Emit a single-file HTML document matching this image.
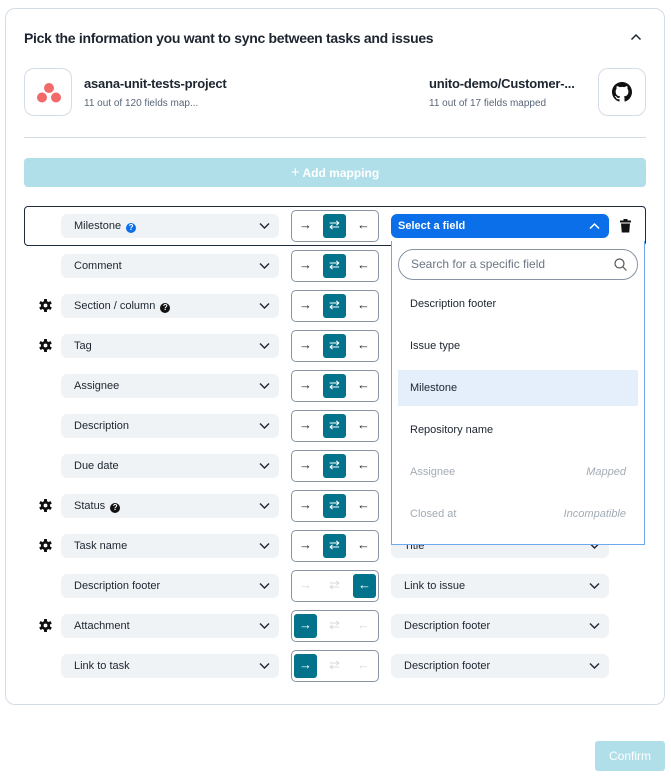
<!DOCTYPE html>
<html><head><meta charset="utf-8"><style>
*{box-sizing:border-box;margin:0;padding:0}
body{width:671px;height:782px;background:#fff;font-family:"Liberation Sans",sans-serif;color:#1c2530;position:relative;overflow:hidden}
.a{position:absolute}
.card{left:5px;top:8px;width:660px;height:697px;border:1px solid #d4dce6;border-radius:10px}
.title{left:24px;top:30px;font-size:14px;font-weight:bold;letter-spacing:-0.3px}
.logo{width:48px;height:48px;border:1px solid #d4dce6;border-radius:10px;top:68px}
.name{font-size:13px;font-weight:bold;top:76px;letter-spacing:-0.2px}
.sub{font-size:10px;color:#59677a;top:98px}
.sel{height:24px;background:#f0f3f6;border-radius:6px;font-size:11px;line-height:24px;padding-left:13px}
.chev{position:absolute;right:9px;top:8px}
.ab{width:88px;height:32px;border:1px solid #8894a3;border-radius:5px;background:#fff}
.btn{position:absolute;top:3px;width:23px;height:24px;border-radius:3px;font-size:13px;line-height:22px;text-align:center;color:#1c2530}
.on{background:#03738c;color:#fff}
.off{color:#d5dbe2}
.help{display:inline-block;width:10px;height:10px;border-radius:50%;background:#111;color:#fff;font-size:8px;line-height:10px;text-align:center;font-weight:bold;vertical-align:-1px;margin-left:5px}
.gear{left:39px;width:13px;height:13px}
.dd{left:391px;top:241px;width:254px;height:304px;border:1px solid #6ea8ee;background:#fff;border-top:none}
.it{position:absolute;left:18px;font-size:11px}
</style></head><body>
<svg width="0" height="0" style="position:absolute"><defs><g id="g"><g fill="#111"><rect x="5" y="0" width="3" height="13" rx="0.5"/><rect x="5" y="0" width="3" height="13" rx="0.5" transform="rotate(60 6.5 6.5)"/><rect x="5" y="0" width="3" height="13" rx="0.5" transform="rotate(120 6.5 6.5)"/><circle cx="6.5" cy="6.5" r="4.6"/></g><circle cx="6.5" cy="6.5" r="1.9" fill="#fff"/></g></defs></svg>
<div class="a card"></div>
<div class="a title">Pick the information you want to sync between tasks and issues</div>
<svg class="a" style="left:630px;top:33px" width="12" height="8" viewBox="0 0 12 8"><path d="M1.5 6.5L6 2l4.5 4.5" fill="none" stroke="#1c2530" stroke-width="1.5"/></svg>

<div class="a logo" style="left:24px"><svg width="46" height="46"><circle cx="24" cy="19" r="5" fill="#f06a6a"/><circle cx="17" cy="28.5" r="5" fill="#f06a6a"/><circle cx="31" cy="28.5" r="5" fill="#f06a6a"/></svg></div>
<div class="a name" style="left:84px">asana-unit-tests-project</div>
<div class="a sub" style="left:84px">11 out of 120 fields map...</div>
<div class="a name" style="left:429px">unito-demo/Customer-...</div>
<div class="a sub" style="left:429px">11 out of 17 fields mapped</div>
<div class="a logo" style="left:598px"><svg style="position:absolute;left:13px;top:13px" width="20" height="20" viewBox="0 0 16 16"><path fill="#111" d="M8 0C3.58 0 0 3.58 0 8c0 3.540 2.290 6.530 5.470 7.590.4.07.55-.17.55-.38 0-.19-.01-.82-.01-1.49-2.010.37-2.530-.49-2.690-.94-.09-.23-.48-.94-.82-1.130-.28-.15-.68-.52-.01-.53.63-.01 1.080.58 1.230.82.72 1.210 1.870.87 2.330.66.07-.52.28-.87.51-1.070-1.780-.2-3.640-.89-3.640-3.950 0-.87.31-1.590.82-2.150-.08-.2-.36-1.020.08-2.120 0 0 .67-.21 2.200.82.64-.18 1.320-.27 2-.27.68 0 1.360.09 2 .27 1.530-1.040 2.200-.82 2.200-.82.44 1.100.16 1.920.08 2.120.51.56.82 1.270.82 2.150 0 3.070-1.870 3.750-3.650 3.950.29.25.54.73.54 1.480 0 1.070-.01 1.930-.01 2.200 0 .21.15.46.55.38A8.013 8.013 0 0016 8c0-4.420-3.580-8-8-8z"/></svg></div>
<div class="a" style="left:24px;top:137px;width:622px;height:1px;background:#d4dce6"></div>
<div class="a" style="left:24px;top:158px;width:622px;height:29px;background:#b0dfe9;border-radius:4px;color:#fff;font-size:12px;font-weight:bold;text-align:center;line-height:29px"><span style="font-weight:normal;font-size:15px">+</span> Add mapping</div>

<div class="a" style="left:24px;top:206px;width:622px;height:40px;border:1px solid #1d2b3a;border-radius:4px"></div>

<div class="a sel" style="left:61px;top:214px;width:218px">Milestone<span class="help" style="background:#0a6fe8">?</span><svg class="chev" width="11" height="8"><path d="M1 1.5l4.5 4.5 4.5-4.5" fill="none" stroke="#1c2530" stroke-width="1.4"/></svg></div>
<div class="a ab" style="left:291px;top:210px"><div class="btn" style="left:2px">→</div><div class="btn on" style="left:31px">⇄</div><div class="btn" style="left:60px">←</div></div>
<div class="a sel" style="left:391px;top:214px;width:218px;background:#0a6fe8;color:#fff;font-weight:bold;padding-left:7px">Select a field<svg class="chev" style="top:8px" width="11" height="8"><path d="M1 6.5l4.5-4.5 4.5 4.5" fill="none" stroke="#fff" stroke-width="1.5"/></svg></div>
<svg class="a" style="left:620px;top:219px" width="11" height="14" viewBox="0 0 11 14"><rect x="0" y="1.5" width="11" height="2" fill="#111"/><rect x="3.5" y="0" width="4" height="2" fill="#111"/><path d="M1 4.5h9l-.8 9H1.8z" fill="#111"/></svg>

<div class="a sel" style="left:61px;top:254px;width:218px">Comment<svg class="chev" width="11" height="8"><path d="M1 1.5l4.5 4.5 4.5-4.5" fill="none" stroke="#1c2530" stroke-width="1.4"/></svg></div>
<div class="a ab" style="left:291px;top:250px"><div class="btn" style="left:2px">→</div><div class="btn on" style="left:31px">⇄</div><div class="btn" style="left:60px">←</div></div>

<svg class="a gear" style="top:299px"><use href="#g"/></svg>
<div class="a sel" style="left:61px;top:294px;width:218px">Section / column<span class="help">?</span><svg class="chev" width="11" height="8"><path d="M1 1.5l4.5 4.5 4.5-4.5" fill="none" stroke="#1c2530" stroke-width="1.4"/></svg></div>
<div class="a ab" style="left:291px;top:290px"><div class="btn" style="left:2px">→</div><div class="btn on" style="left:31px">⇄</div><div class="btn" style="left:60px">←</div></div>

<svg class="a gear" style="top:339px"><use href="#g"/></svg>
<div class="a sel" style="left:61px;top:334px;width:218px">Tag<svg class="chev" width="11" height="8"><path d="M1 1.5l4.5 4.5 4.5-4.5" fill="none" stroke="#1c2530" stroke-width="1.4"/></svg></div>
<div class="a ab" style="left:291px;top:330px"><div class="btn" style="left:2px">→</div><div class="btn on" style="left:31px">⇄</div><div class="btn" style="left:60px">←</div></div>

<div class="a sel" style="left:61px;top:374px;width:218px">Assignee<svg class="chev" width="11" height="8"><path d="M1 1.5l4.5 4.5 4.5-4.5" fill="none" stroke="#1c2530" stroke-width="1.4"/></svg></div>
<div class="a ab" style="left:291px;top:370px"><div class="btn" style="left:2px">→</div><div class="btn on" style="left:31px">⇄</div><div class="btn" style="left:60px">←</div></div>

<div class="a sel" style="left:61px;top:414px;width:218px">Description<svg class="chev" width="11" height="8"><path d="M1 1.5l4.5 4.5 4.5-4.5" fill="none" stroke="#1c2530" stroke-width="1.4"/></svg></div>
<div class="a ab" style="left:291px;top:410px"><div class="btn" style="left:2px">→</div><div class="btn on" style="left:31px">⇄</div><div class="btn" style="left:60px">←</div></div>

<div class="a sel" style="left:61px;top:454px;width:218px">Due date<svg class="chev" width="11" height="8"><path d="M1 1.5l4.5 4.5 4.5-4.5" fill="none" stroke="#1c2530" stroke-width="1.4"/></svg></div>
<div class="a ab" style="left:291px;top:450px"><div class="btn" style="left:2px">→</div><div class="btn on" style="left:31px">⇄</div><div class="btn" style="left:60px">←</div></div>

<svg class="a gear" style="top:499px"><use href="#g"/></svg>
<div class="a sel" style="left:61px;top:494px;width:218px">Status<span class="help">?</span><svg class="chev" width="11" height="8"><path d="M1 1.5l4.5 4.5 4.5-4.5" fill="none" stroke="#1c2530" stroke-width="1.4"/></svg></div>
<div class="a ab" style="left:291px;top:490px"><div class="btn" style="left:2px">→</div><div class="btn on" style="left:31px">⇄</div><div class="btn" style="left:60px">←</div></div>

<svg class="a gear" style="top:539px"><use href="#g"/></svg>
<div class="a sel" style="left:61px;top:534px;width:218px">Task name<svg class="chev" width="11" height="8"><path d="M1 1.5l4.5 4.5 4.5-4.5" fill="none" stroke="#1c2530" stroke-width="1.4"/></svg></div>
<div class="a ab" style="left:291px;top:530px"><div class="btn" style="left:2px">→</div><div class="btn on" style="left:31px">⇄</div><div class="btn" style="left:60px">←</div></div>
<div class="a sel" style="left:391px;top:534px;width:218px">Title<svg class="chev" width="11" height="8"><path d="M1 1.5l4.5 4.5 4.5-4.5" fill="none" stroke="#1c2530" stroke-width="1.4"/></svg></div>

<div class="a sel" style="left:61px;top:574px;width:218px">Description footer<svg class="chev" width="11" height="8"><path d="M1 1.5l4.5 4.5 4.5-4.5" fill="none" stroke="#1c2530" stroke-width="1.4"/></svg></div>
<div class="a ab" style="left:291px;top:570px"><div class="btn off" style="left:2px">→</div><div class="btn off" style="left:31px">⇄</div><div class="btn on" style="left:61px">←</div></div>
<div class="a sel" style="left:391px;top:574px;width:218px">Link to issue<svg class="chev" width="11" height="8"><path d="M1 1.5l4.5 4.5 4.5-4.5" fill="none" stroke="#1c2530" stroke-width="1.4"/></svg></div>

<svg class="a gear" style="top:619px"><use href="#g"/></svg>
<div class="a sel" style="left:61px;top:614px;width:218px">Attachment<svg class="chev" width="11" height="8"><path d="M1 1.5l4.5 4.5 4.5-4.5" fill="none" stroke="#1c2530" stroke-width="1.4"/></svg></div>
<div class="a ab" style="left:291px;top:610px"><div class="btn on" style="left:2px">→</div><div class="btn off" style="left:31px">⇄</div><div class="btn off" style="left:60px">←</div></div>
<div class="a sel" style="left:391px;top:614px;width:218px">Description footer<svg class="chev" width="11" height="8"><path d="M1 1.5l4.5 4.5 4.5-4.5" fill="none" stroke="#1c2530" stroke-width="1.4"/></svg></div>

<div class="a sel" style="left:61px;top:654px;width:218px">Link to task<svg class="chev" width="11" height="8"><path d="M1 1.5l4.5 4.5 4.5-4.5" fill="none" stroke="#1c2530" stroke-width="1.4"/></svg></div>
<div class="a ab" style="left:291px;top:650px"><div class="btn on" style="left:2px">→</div><div class="btn off" style="left:31px">⇄</div><div class="btn off" style="left:60px">←</div></div>
<div class="a sel" style="left:391px;top:654px;width:218px">Description footer<svg class="chev" width="11" height="8"><path d="M1 1.5l4.5 4.5 4.5-4.5" fill="none" stroke="#1c2530" stroke-width="1.4"/></svg></div>

<div class="a dd">
  <div class="a" style="left:6px;top:8px;width:240px;height:31px;border:1px solid #8894a3;border-radius:16px;font-size:12px;color:#6b7684;line-height:29px;padding-left:12px">Search for a specific field
    <svg style="position:absolute;right:10px;top:8px" width="13" height="13"><circle cx="5.5" cy="5.5" r="4.5" fill="none" stroke="#555" stroke-width="1.2"/><path d="M9 9l3.5 3.5" stroke="#555" stroke-width="1.2"/></svg></div>
  <div class="it" style="top:57px">Description footer</div>
  <div class="it" style="top:99px">Issue type</div>
  <div class="a" style="left:6px;top:129px;width:240px;height:36px;background:#e5eefb"></div>
  <div class="it" style="top:141px">Milestone</div>
  <div class="it" style="top:183px">Repository name</div>
  <div class="it" style="top:225px;color:#a2abb6">Assignee</div>
  <div class="a" style="right:18px;top:225px;font-size:11px;color:#a2abb6;font-style:italic">Mapped</div>
  <div class="it" style="top:267px;color:#a2abb6">Closed at</div>
  <div class="a" style="right:18px;top:267px;font-size:11px;color:#a2abb6;font-style:italic">Incompatible</div>
</div>

<div class="a" style="left:595px;top:741px;width:70px;height:30px;background:#b0dfe9;border-radius:3px;color:#fff;font-size:12px;text-align:center;line-height:30px">Confirm</div>
</body></html>
